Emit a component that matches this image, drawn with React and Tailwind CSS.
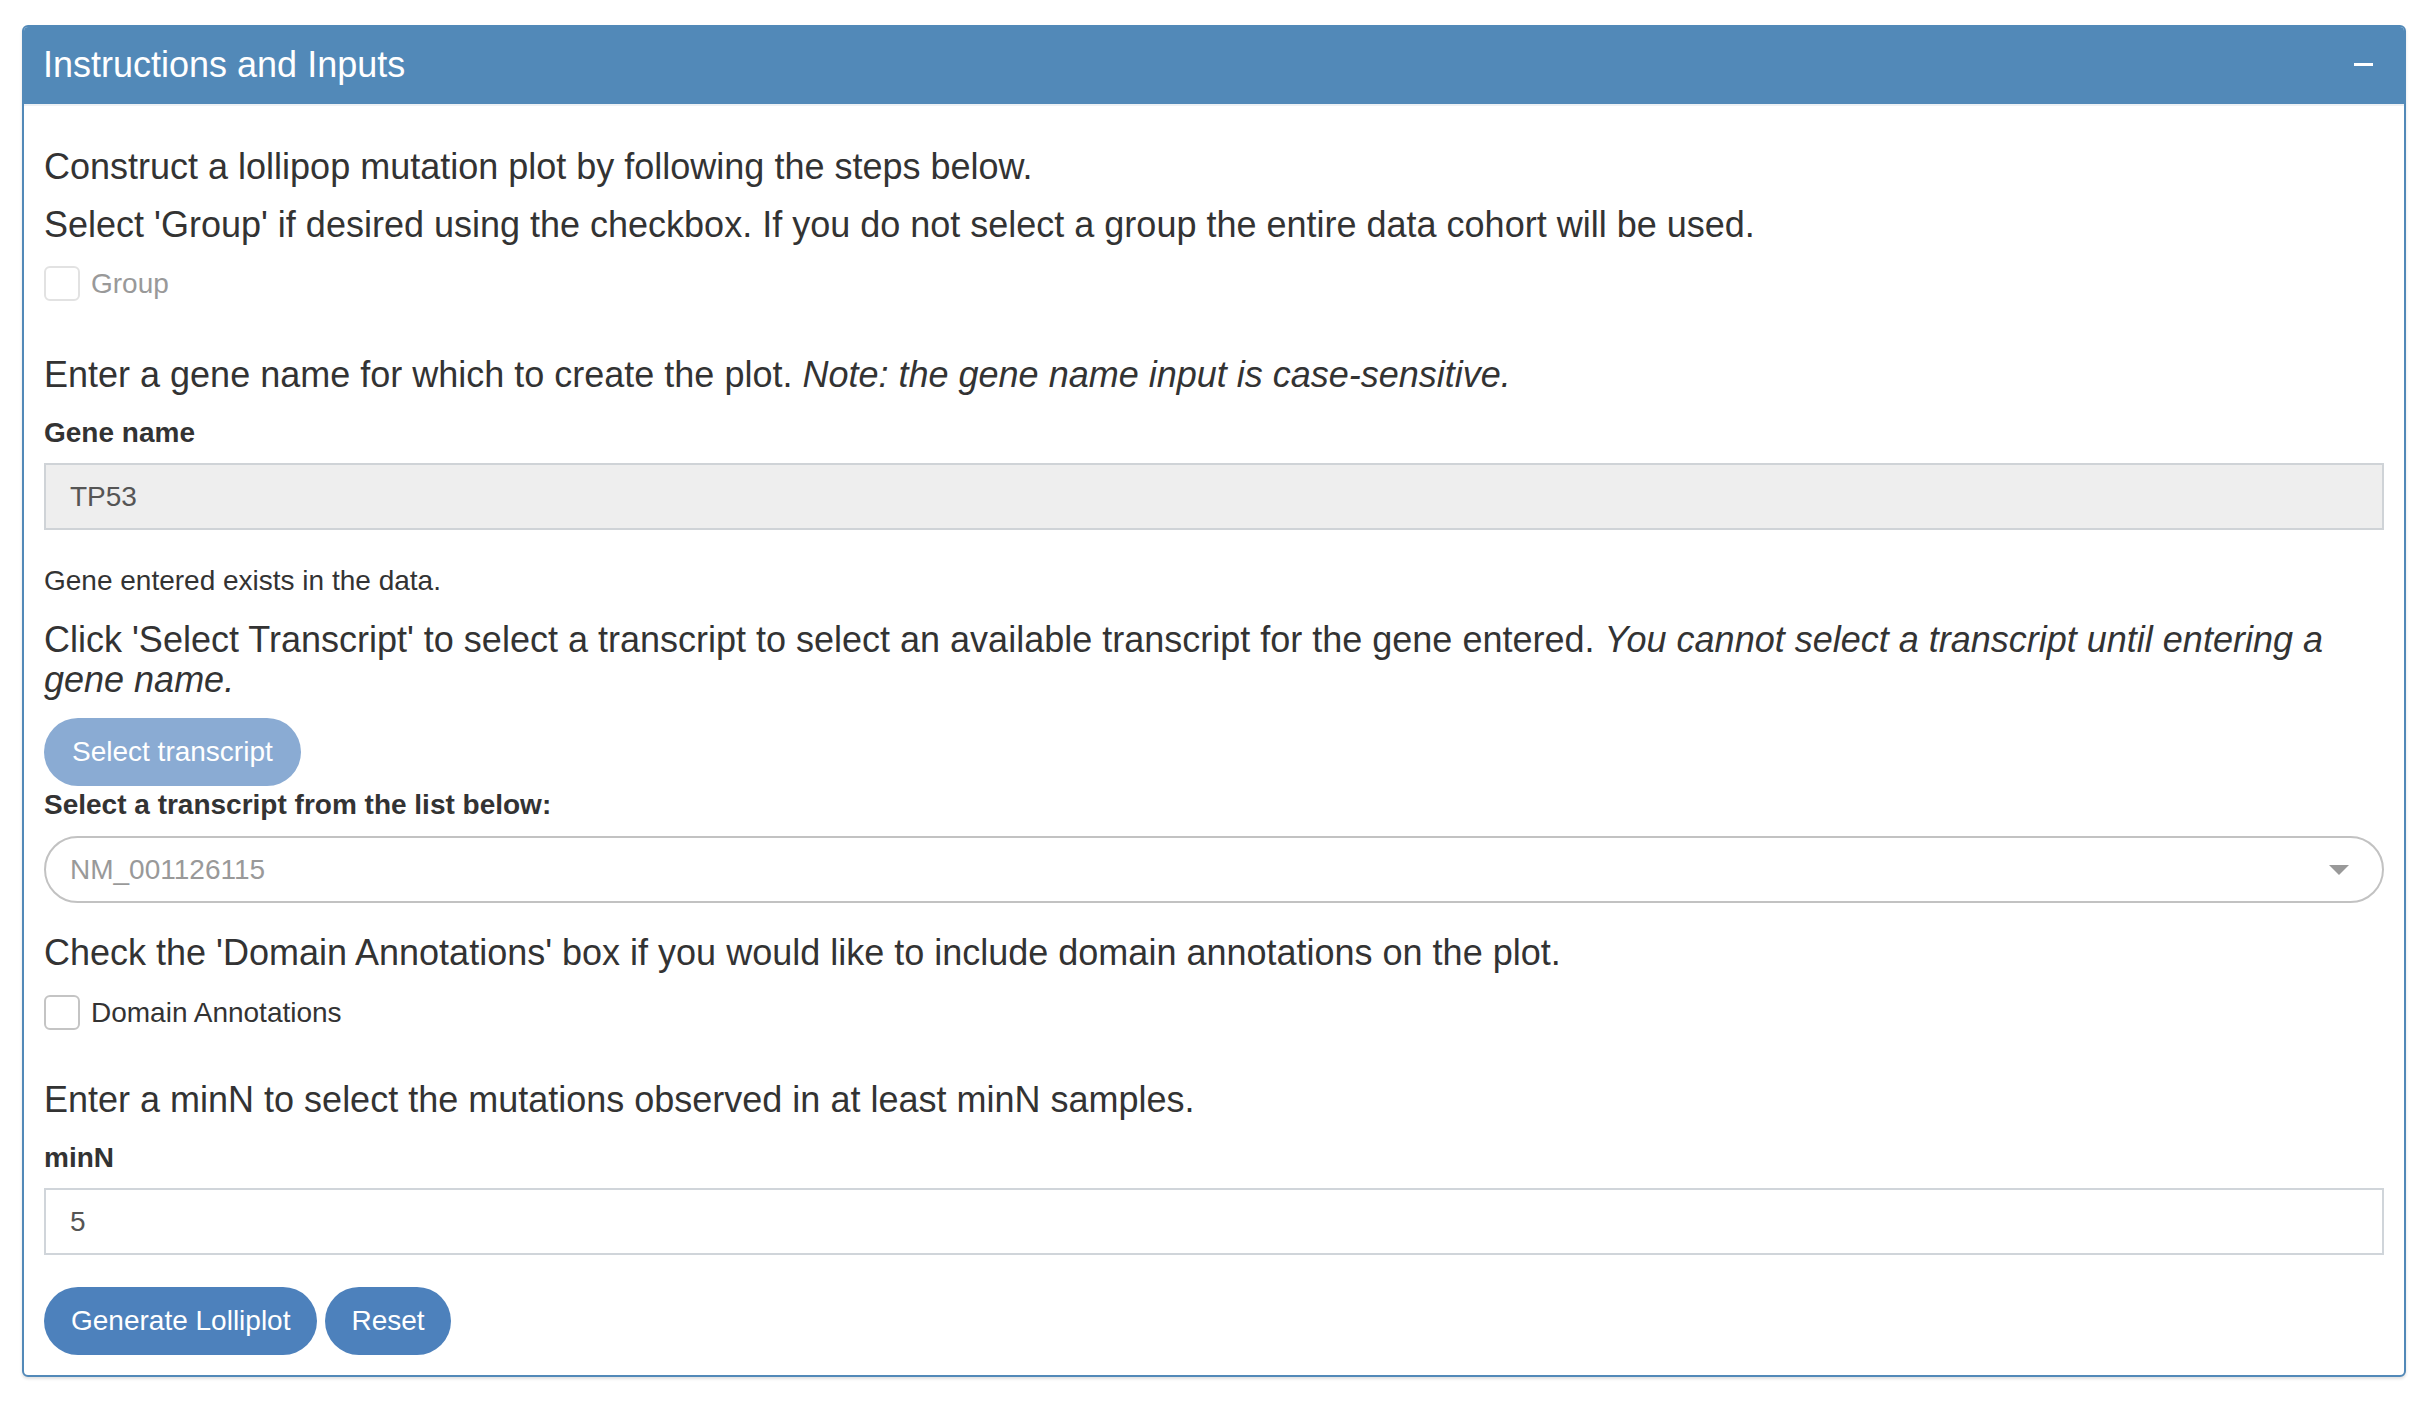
import React from "react";

const font = { fontFamily: '"Liberation Sans", Arial, Helvetica, sans-serif' };

function Checkbox({ disabled }) {
  return (
    <span
      className={
        "inline-block w-[36px] h-[35px] rounded-[6px] border-2 bg-white shrink-0 " +
        (disabled ? "border-[#e2e2e2]" : "border-[#c4c4c4]")
      }
    />
  );
}

export default function App() {
  return (
    <div className="min-h-[1406px] bg-white text-[#333]" style={font}>
      <div className="pt-[25px] pl-[22px] w-[2406px]">
        <div className="border-2 border-[#5289b8] rounded-[6px] overflow-hidden shadow-[0_2px_3px_rgba(0,0,0,0.12)] bg-white">
          {/* Header */}
          <div className="h-[79px] bg-[#5289b8] flex items-center justify-between pl-[19px] pr-[31px] border-b-2 border-[#eef1f4]">
            <h3 className="text-[36px] leading-[40px] text-white font-normal mt-[-2px]">Instructions and Inputs</h3>
            <span className="block w-[19px] h-[3px] bg-white mt-[-3px]" />
          </div>

          {/* Body */}
          <div className="px-[20px] pt-[41px] pb-[20px] flex flex-col">
            <p className="text-[36px] leading-[40px]">Construct a lollipop mutation plot by following the steps below.</p>
            <p className="text-[36px] leading-[40px] mt-[18px]">
              Select 'Group' if desired using the checkbox. If you do not select a group the entire data cohort will be used.
            </p>
            <label className="flex items-center gap-[11px] mt-[21px] h-[35px]">
              <Checkbox disabled />
              <span className="text-[28px] leading-[32px] text-[#999]">Group</span>
            </label>

            <p className="text-[36px] leading-[40px] mt-[54px]">
              Enter a gene name for which to create the plot. <em>Note: the gene name input is case-sensitive.</em>
            </p>
            <label className="text-[28px] leading-[32px] font-bold mt-[22px]">Gene name</label>
            <div className="mt-[14px] h-[67px] border-2 border-[#cfd3d7] bg-[#eeeeee] flex items-center pl-[24px] text-[28px] text-[#555]">
              TP53
            </div>

            <p className="text-[28px] leading-[32px] mt-[35px]">Gene entered exists in the data.</p>

            <p className="text-[36px] leading-[40px] mt-[23px]">
              Click 'Select Transcript' to select a transcript to select an available transcript for the gene entered.{" "}
              <em>You cannot select a transcript until entering a gene name.</em>
            </p>
            <div className="mt-[18px]">
              <button className="h-[68px] px-[28px] rounded-full bg-[#8aabd3] text-white text-[28px]">
                Select transcript
              </button>
            </div>
            <label className="text-[28px] leading-[32px] font-bold mt-[3px]">Select a transcript from the list below:</label>
            <div className="mt-[15px] h-[67px] border-2 border-[#c2c2c2] rounded-full flex items-center justify-between pl-[24px] pr-[33px] text-[28px] text-[#999]">
              <span>NM_001126115</span>
              <svg width="20" height="10" viewBox="0 0 20 10">
                <path d="M0 0 L20 0 L10 10 Z" fill="#999" />
              </svg>
            </div>

            <p className="text-[36px] leading-[40px] mt-[30px]">
              Check the 'Domain Annotations' box if you would like to include domain annotations on the plot.
            </p>
            <label className="flex items-center gap-[11px] mt-[22px] h-[35px]">
              <Checkbox />
              <span className="text-[28px] leading-[32px] text-[#333]">Domain Annotations</span>
            </label>

            <p className="text-[36px] leading-[40px] mt-[50px]">
              Enter a minN to select the mutations observed in at least minN samples.
            </p>
            <label className="text-[28px] leading-[32px] font-bold mt-[22px]">minN</label>
            <div className="mt-[14px] h-[67px] border-2 border-[#d0d5da] bg-white flex items-center pl-[24px] text-[28px] text-[#555]">
              5
            </div>

            <div className="mt-[32px] flex gap-[8px]">
              <button className="h-[68px] px-[27px] rounded-full bg-[#4d81bc] text-white text-[28px]">
                Generate Lolliplot
              </button>
              <button className="h-[68px] px-[26px] rounded-full bg-[#4d81bc] text-white text-[28px]">
                Reset
              </button>
            </div>
          </div>
        </div>
      </div>
    </div>
  );
}
